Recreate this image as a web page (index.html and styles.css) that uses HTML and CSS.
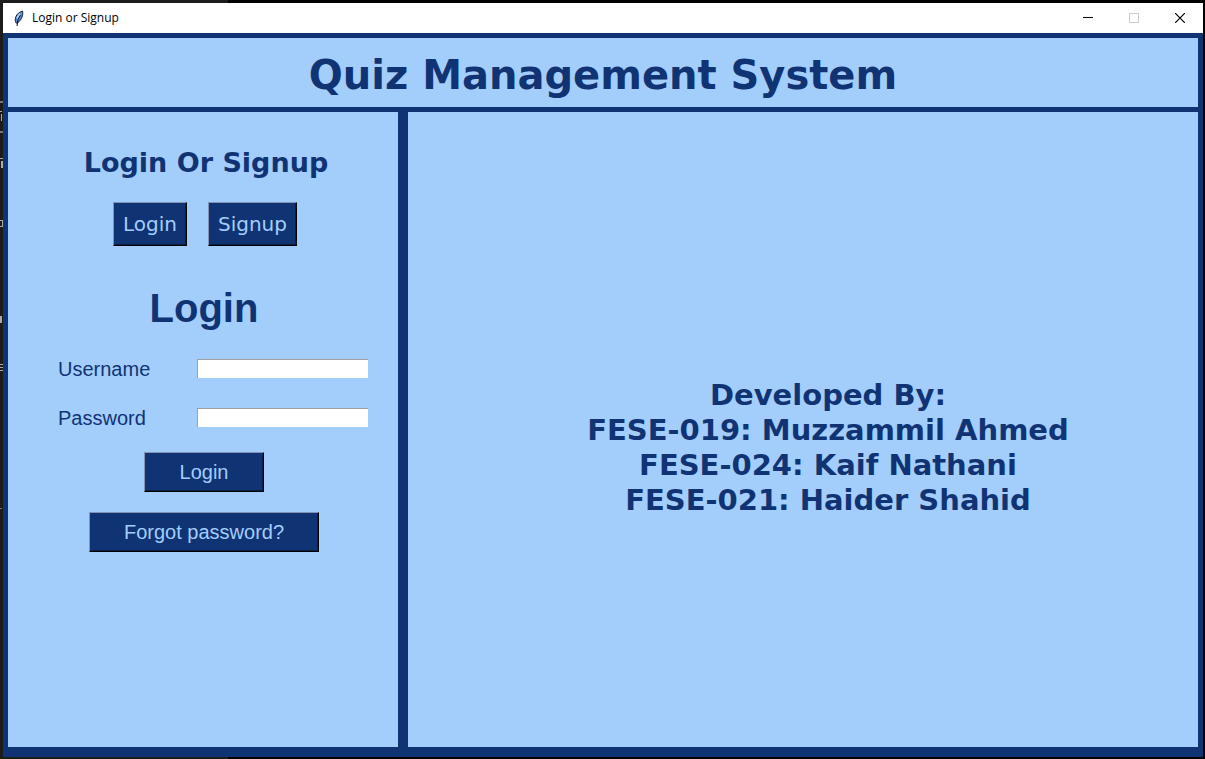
FILE: index.html
```html
<!DOCTYPE html>
<html lang="en">
<head>
<meta charset="utf-8">
<title>Login or Signup</title>
<link rel="stylesheet" href="styles.css">
</head>
<body>
<svg class="backdrop" width="3" height="759" aria-hidden="true" shape-rendering="crispEdges">
  <path d="M0 101h3v2H0zM0 131h3v2H0zM0 508h2v1H0z" fill="#777"/>
  <path d="M0 111h2v1H0zM1 114h1v7H1zM0 158h3v1H0zM1 161h2v7H1zM0 220h2v1H0zM2 220h1v7H2zM0 226h2v1H0zM0 316h2v7H0zM0 364h3v1H0zM0 367h3v1H0zM0 370h3v1H0z" fill="#aaa"/>
</svg>
<div class="window">
  <header class="titlebar">
    <svg class="feather" width="16" height="16" viewBox="0 0 16 16" aria-hidden="true">
      <path d="M5 13C3 9 5 3 11.500 1c1 4-1 9-5 12z" fill="#4f8fdc" stroke="#1b2430" stroke-width="1"/>
      <path d="M9 3.500 6 8.500" fill="none" stroke="#b9dafa" stroke-width="1.500"/>
      <path d="M9.500 5 7 9.500 6 16" fill="none" stroke="#111" stroke-width="1"/>
    </svg>
    <span class="caption">Login or Signup</span>
    <button class="control" type="button" aria-label="Minimize"><svg width="10" height="10"><path d="M0 4.500h10" stroke="#000"/></svg></button>
    <button class="control" type="button" aria-label="Maximize" disabled><svg width="10" height="10"><path d="M.5.5h9v9h-9z" fill="none" stroke="#ccc"/></svg></button>
    <button class="control" type="button" aria-label="Close"><svg width="10" height="10"><path d="M0 0l10 10M10 0L0 10" stroke="#000" stroke-width="1.200"/></svg></button>
  </header>
  <main class="app">
    <div class="banner"><h1>Quiz Management System</h1></div>
    <div class="columns">
      <section class="panel side">
        <h2>Login Or Signup</h2>
        <div class="tabs">
          <button class="btn tab" type="button">Login</button>
          <button class="btn tab" type="button">Signup</button>
        </div>
        <form class="login">
          <h3>Login</h3>
          <div class="field"><label for="username">Username</label><input id="username" type="text"></div>
          <div class="field"><label for="password">Password</label><input id="password" type="password"></div>
          <button class="btn submit" type="button">Login</button>
          <button class="btn forgot" type="button">Forgot password?</button>
        </form>
      </section>
      <section class="panel credits">
        <p>Developed By:<br>FESE-019: Muzzammil Ahmed<br>FESE-024: Kaif Nathani<br>FESE-021: Haider Shahid</p>
      </section>
    </div>
  </main>
</div>
</body>
</html>
```
FILE: styles.css
```css
* { box-sizing: border-box; }
body {
  margin: 0;
  min-height: 100vh;
  display: flex;
  padding: 3px 2px 2px 3px;
  background: linear-gradient(to right, #1c1c1c 228px, #000 228px);
}
h1, h2, h3, p { margin: 0; }
.backdrop { position: absolute; top: 0; left: 0; }
.window { flex: 1; display: flex; flex-direction: column; }
.titlebar {
  height: 30px;
  display: flex;
  align-items: center;
  padding-left: 8px;
  background: #fff;
}
.caption {
  flex: 1;
  margin-left: 5px;
  font: 12px/16px "Open Sans", "Noto Sans", sans-serif;
  color: #000;
}
.control {
  width: 46px;
  height: 30px;
  padding: 0;
  border: 0;
  background: none;
  display: grid;
  place-items: center;
}
.app {
  flex: 1;
  display: flex;
  flex-direction: column;
  gap: 5px;
  padding: 5px 5px 10px;
  background: #103374;
  color: #103374;
}
.banner {
  height: 69px;
  display: grid;
  place-items: center;
  padding-top: 5px;
  background: #a3cefc;
}
h1 { font: bold 40px/48px Verdana, "DejaVu Sans", sans-serif; }
.columns { flex: 1; display: flex; gap: 10px; }
.panel { background: #a3cefc; }
.side {
  flex: 0 0 390px;
  display: flex;
  flex-direction: column;
  align-items: center;
  padding-top: 35px;
}
h2 {
  font: bold 27px/32px Verdana, "DejaVu Sans", sans-serif;
  margin-left: 6px;
}
.tabs { display: flex; gap: 21px; margin: 23px 0 39px 4px; }
.btn {
  padding: 0;
  border: 1px solid #000;
  border-top-color: #8393b5;
  border-left-color: #8393b5;
  background: #103374;
  box-shadow: inset -1px -1px #0a1f48;
  color: #a3cefc;
  font: 20px/24px "Liberation Sans", Arial, sans-serif;
}
.tab {
  height: 44px;
  padding: 0 9px;
  font-family: Verdana, "DejaVu Sans", sans-serif;
}
.login {
  width: 310px;
  margin-left: 20px;
  display: flex;
  flex-direction: column;
  align-items: center;
}
.login h3, .login .btn { margin-right: 18px; }
h3 {
  font: bold 40px/46px "Liberation Sans", Arial, sans-serif;
  margin-bottom: 26px;
}
.field {
  width: 100%;
  display: flex;
  justify-content: space-between;
  align-items: flex-start;
  margin-bottom: 25px;
  font: 20px/24px "Liberation Sans", Arial, sans-serif;
}
.field + .btn { margin-top: -3px; }
.field input {
  width: 171px;
  height: 19px;
  margin: 2px 0 0;
  padding: 0 2px;
  border: 0 solid #a0a0a0;
  border-width: 1px 0 0 1px;
  background: #fff;
}
.submit { width: 120px; height: 40px; margin-bottom: 20px; }
.forgot { width: 230px; height: 40px; }
.credits {
  flex: 1;
  display: grid;
  place-items: center;
  padding: 37px 0 0 50px;
  text-align: center;
}
.credits p { font: bold 29px/35px Verdana, "DejaVu Sans", sans-serif; }
```
